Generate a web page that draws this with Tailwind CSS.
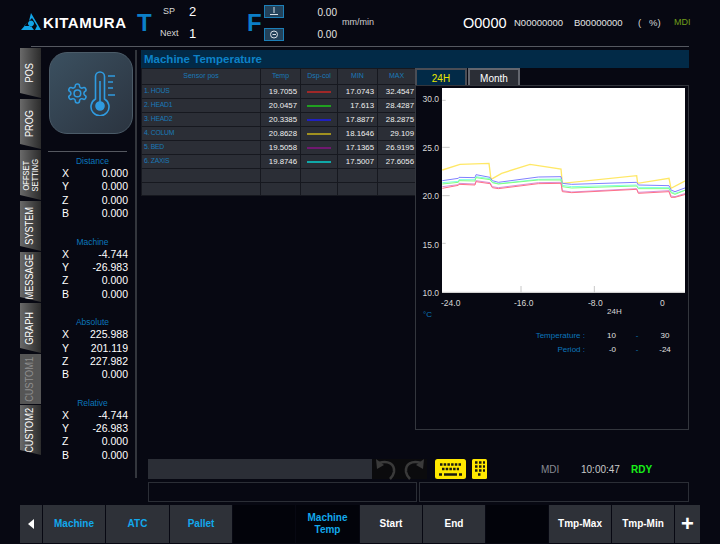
<!DOCTYPE html>
<html lang="en">
<head>
    <meta charset="UTF-8">
    <title>Machine Temperature</title>
    <script src="https://cdn.jsdelivr.net/npm/@tailwindcss/browser@4"></script>
</head>
<body class="w-[720px] h-[544px] overflow-hidden bg-[#070812] text-white font-['Liberation_Sans',sans-serif]">
    <!-- Header -->
    <header class="h-[46px] flex items-center pl-[21px]">
        <svg class="w-[20px] h-[17px] mt-[-3px]" viewBox="0 0 20 17">
            <path fill="#12a5e8" fill-rule="evenodd" d="M10 0 20 17H14L16 13 11 5 8 8ZM7 9 3 13H10L13 17H0ZM10 7.500a3 3 0 1 0 .01 0Z"/>
        </svg>
        <span class="ml-[2px] w-[84px] mt-[-1px] text-[15px] leading-none font-bold tracking-[0.6px]">KITAMURA</span>
        <span class="ml-[10px] w-[24px] text-[24px] leading-none font-bold text-[#0b7fc8]">T</span>
        <div class="w-[46px] ml-[-1px] flex flex-col gap-[7px]">
            <div class="flex items-center h-[15px] text-[9px] text-[#d8d8d8]"><span class="w-[29px] pl-[3px]">SP</span><span class="text-[13px] text-white">2</span></div>
            <div class="flex items-center h-[15px] text-[9px] text-[#d8d8d8]"><span class="w-[29px]">Next</span><span class="text-[13px] text-white">1</span></div>
        </div>
        <span class="ml-[41px] w-[17px] text-[24px] leading-none font-bold text-[#0b7fc8]">F</span>
        <div class="flex flex-col gap-[10px]">
            <div class="w-[20px] h-[13px] border border-[#1c7fb8] bg-[#23425a] flex justify-center">
                <svg class="w-[10px] h-[11px]" viewBox="0 0 10 11" fill="none" stroke="#d8e0e6"><path d="M5 1V7M1 8.500H9"/></svg>
            </div>
            <div class="w-[20px] h-[13px] border border-[#1c7fb8] bg-[#23425a] flex justify-center">
                <svg class="w-[10px] h-[11px]" viewBox="0 0 10 11" fill="none" stroke="#d8e0e6"><circle cx="5" cy="5.500" r="3.500"/><path d="M3.500 5.500H7"/></svg>
            </div>
        </div>
        <div class="w-[53px] flex flex-col gap-[9px] text-right text-[10px] leading-[13px] text-[#e4e4e4]">
            <span>0.00</span>
            <span>0.00</span>
        </div>
        <span class="ml-[5px] w-[121px] text-[9px] text-[#d0d0d0]">mm/min</span>
        <span class="w-[51px] text-[14.500px] leading-none text-white">O0000</span>
        <span class="w-[60px] text-[9.500px] text-[#e4e4e4]">N00000000</span>
        <span class="w-[64px] text-[9.500px] text-[#e4e4e4]">B00000000</span>
        <span class="w-[36px] text-[9.500px] text-[#d8d8d8] whitespace-pre">(   %)</span>
        <span class="text-[9px] text-[#6f9e1a]">MDI</span>
    </header>
    <div class="h-px ml-[31px] w-[658px] bg-[#555860]"></div>

    <main class="flex h-[457px]">
        <!-- Side tabs -->
        <nav class="ml-[20px] w-[21px] pt-[1px] flex flex-col gap-[1px]">
            <div class="h-[50px] flex items-center justify-center bg-gradient-to-r from-[#6a6a6a] to-[#2c2c2c] [clip-path:polygon(0_0,100%_0,100%_100%,0_90%)]"><span class="text-[9.200px] leading-none [writing-mode:vertical-rl] rotate-180 scale-x-[1.2]">POS</span></div>
            <div class="h-[50px] flex items-center justify-center bg-gradient-to-r from-[#6a6a6a] to-[#2c2c2c] [clip-path:polygon(0_0,100%_0,100%_100%,0_90%)]"><span class="text-[9.200px] leading-none [writing-mode:vertical-rl] rotate-180 scale-x-[1.2]">PROG</span></div>
            <div class="h-[50px] flex items-center justify-center bg-gradient-to-r from-[#6a6a6a] to-[#2c2c2c] [clip-path:polygon(0_0,100%_0,100%_100%,0_90%)]"><span class="text-[7.500px] leading-[8px] text-center [writing-mode:vertical-rl] rotate-180 scale-x-[1.2]">OFFSET<br>SETTING</span></div>
            <div class="h-[50px] flex items-center justify-center bg-gradient-to-r from-[#6a6a6a] to-[#2c2c2c] [clip-path:polygon(0_0,100%_0,100%_100%,0_90%)]"><span class="text-[9.200px] leading-none [writing-mode:vertical-rl] rotate-180 scale-x-[1.2]">SYSTEM</span></div>
            <div class="h-[50px] flex items-center justify-center bg-gradient-to-r from-[#6a6a6a] to-[#2c2c2c] [clip-path:polygon(0_0,100%_0,100%_100%,0_90%)]"><span class="text-[9.200px] leading-none [writing-mode:vertical-rl] rotate-180 scale-x-[1.2]">MESSAGE</span></div>
            <div class="h-[50px] flex items-center justify-center bg-gradient-to-r from-[#6a6a6a] to-[#2c2c2c] [clip-path:polygon(0_0,100%_0,100%_100%,0_90%)]"><span class="text-[9.200px] leading-none [writing-mode:vertical-rl] rotate-180 scale-x-[1.2]">GRAPH</span></div>
            <div class="h-[50px] flex items-center justify-center bg-[#555555]"><span class="text-[9.200px] leading-none text-[#8e8e8e] [writing-mode:vertical-rl] rotate-180 scale-x-[1.2]">CUSTOM1</span></div>
            <div class="h-[50px] flex items-center justify-center bg-gradient-to-r from-[#6a6a6a] to-[#2c2c2c] [clip-path:polygon(0_0,100%_0,100%_100%,0_90%)]"><span class="text-[9.200px] leading-none [writing-mode:vertical-rl] rotate-180 scale-x-[1.2]">CUSTOM2</span></div>
        </nav>

        <!-- Position readouts -->
        <section class="w-[96px] h-[428px] mt-[3px] border-r-2 border-[#33363d]">
            <div class="ml-[8px] mt-[2px] w-[84px] h-[82px] rounded-[18px] border border-[#4b5b68] bg-gradient-to-br from-[#3b5060] to-[#2b3440] flex items-center justify-center">
                <svg class="w-[52px] h-[46px]" viewBox="0 0 52 46" fill="none" stroke="#2f9be0" stroke-width="1.600">
                    <g transform="translate(1 12) scale(0.95)">
                        <path d="M12.220 2h-.44a2 2 0 0 0-2 2v.18a2 2 0 0 1-1 1.730l-.43.25a2 2 0 0 1-2 0l-.15-.08a2 2 0 0 0-2.730.73l-.22.38a2 2 0 0 0 .73 2.730l.15.1a2 2 0 0 1 1 1.720v.51a2 2 0 0 1-1 1.740l-.15.09a2 2 0 0 0-.73 2.730l.22.38a2 2 0 0 0 2.730.73l.15-.08a2 2 0 0 1 2 0l.43.25a2 2 0 0 1 1 1.730V20a2 2 0 0 0 2 2h.44a2 2 0 0 0 2-2v-.18a2 2 0 0 1 1-1.730l.43-.25a2 2 0 0 1 2 0l.15.08a2 2 0 0 0 2.730-.73l.22-.39a2 2 0 0 0-.73-2.730l-.15-.08a2 2 0 0 1-1-1.740v-.5a2 2 0 0 1 1-1.740l.15-.09a2 2 0 0 0 .73-2.730l-.22-.38a2 2 0 0 0-2.730-.73l-.15.08a2 2 0 0 1-2 0l-.43-.25a2 2 0 0 1-1-1.730V4a2 2 0 0 0-2-2z"/>
                        <circle cx="12" cy="12" r="3.500"/>
                    </g>
                    <path d="M30.500 29V6.500a4.500 4.500 0 0 1 9 0V29a9 9 0 1 1-9 0Z"/>
                    <path d="M35 11V36"/>
                    <circle cx="35" cy="36" r="4" fill="#2f9be0"/>
                    <path d="M43 6H50M43 12H48M43 18H48M43 25H50"/>
                </svg>
            </div>
            <div class="ml-[7px] mt-[17px] w-[79px] h-px bg-[#555860]"></div>
            <div class="mt-[1px] w-[66px] ml-[8px] box-content text-[10.500px] leading-[13.330px] grid grid-cols-[auto_1fr] pl-[13px]">
                <div class="col-span-2 h-[14px] pt-[2px] pr-[5px] text-[8.500px] text-center text-[#0b76bb]">Distance</div>
                <span>X</span><span class="text-right">0.000</span>
                <span>Y</span><span class="text-right">0.000</span>
                <span>Z</span><span class="text-right">0.000</span>
                <span>B</span><span class="text-right">0.000</span>
                <div class="col-span-2 h-[14px] mt-[13.300px] pt-[2px] pr-[5px] text-[8.500px] text-center text-[#0b76bb]">Machine</div>
                <span>X</span><span class="text-right">-4.744</span>
                <span>Y</span><span class="text-right">-26.983</span>
                <span>Z</span><span class="text-right">0.000</span>
                <span>B</span><span class="text-right">0.000</span>
                <div class="col-span-2 h-[14px] mt-[13.300px] pt-[2px] pr-[5px] text-[8.500px] text-center text-[#0b76bb]">Absolute</div>
                <span>X</span><span class="text-right">225.988</span>
                <span>Y</span><span class="text-right">201.119</span>
                <span>Z</span><span class="text-right">227.982</span>
                <span>B</span><span class="text-right">0.000</span>
                <div class="col-span-2 h-[14px] mt-[13.300px] pt-[2px] pr-[5px] text-[8.500px] text-center text-[#0b76bb]">Relative</div>
                <span>X</span><span class="text-right">-4.744</span>
                <span>Y</span><span class="text-right">-26.983</span>
                <span>Z</span><span class="text-right">0.000</span>
                <span>B</span><span class="text-right">0.000</span>
            </div>
        </section>

        <!-- Content -->
        <section class="ml-[4px] w-[548px] pt-[3px]">
            <h1 class="h-[18px] pl-[3px] bg-[#022a47] text-[11.500px] leading-[18px] font-bold text-[#0d82c8]">Machine Temperature</h1>
            <div class="flex items-start">
                <table class="w-[274px] shrink-0 table-fixed border-collapse bg-[#2b2e36] text-[7.800px] text-right text-[#f0f0f0]">
                    <colgroup><col class="w-[119px]"><col class="w-[40px]"><col class="w-[37px]"><col class="w-[40px]"><col class="w-[38px]"></colgroup>
                    <thead class="text-center text-[7px] text-[#1a7ab8]">
                        <tr class="h-[16px]"><th class="border border-[#16181f] font-normal">Sensor pos</th><th class="border border-[#16181f] font-normal">Temp</th><th class="border border-[#16181f] font-normal">Dsp-col</th><th class="border border-[#16181f] font-normal">MIN</th><th class="border border-[#16181f] font-normal">MAX</th></tr>
                    </thead>
                    <tbody>
                        <tr class="h-[14px]"><td class="border border-[#16181f] pl-[2px] text-left text-[6.800px] tracking-[-0.25px] text-[#1a7ab8]">1. HOUS</td><td class="border border-[#16181f] pr-[3px]">19.7055</td><td class="border border-[#16181f]"><div class="mx-auto w-[24px] h-[2px] bg-[#a02828]"></div></td><td class="border border-[#16181f] pr-[3px]">17.0743</td><td class="border border-[#16181f] pr-[1px]">32.4547</td></tr>
                        <tr class="h-[14px]"><td class="border border-[#16181f] pl-[2px] text-left text-[6.800px] tracking-[-0.25px] text-[#1a7ab8]">2. HEAD1</td><td class="border border-[#16181f] pr-[3px]">20.0457</td><td class="border border-[#16181f]"><div class="mx-auto w-[24px] h-[2px] bg-[#20a020]"></div></td><td class="border border-[#16181f] pr-[3px]">17.613</td><td class="border border-[#16181f] pr-[1px]">28.4287</td></tr>
                        <tr class="h-[14px]"><td class="border border-[#16181f] pl-[2px] text-left text-[6.800px] tracking-[-0.25px] text-[#1a7ab8]">3. HEAD2</td><td class="border border-[#16181f] pr-[3px]">20.3385</td><td class="border border-[#16181f]"><div class="mx-auto w-[24px] h-[2px] bg-[#2020c0]"></div></td><td class="border border-[#16181f] pr-[3px]">17.8877</td><td class="border border-[#16181f] pr-[1px]">28.2875</td></tr>
                        <tr class="h-[14px]"><td class="border border-[#16181f] pl-[2px] text-left text-[6.800px] tracking-[-0.25px] text-[#1a7ab8]">4. COLUM</td><td class="border border-[#16181f] pr-[3px]">20.8628</td><td class="border border-[#16181f]"><div class="mx-auto w-[24px] h-[2px] bg-[#a09020]"></div></td><td class="border border-[#16181f] pr-[3px]">18.1646</td><td class="border border-[#16181f] pr-[1px]">29.109</td></tr>
                        <tr class="h-[14px]"><td class="border border-[#16181f] pl-[2px] text-left text-[6.800px] tracking-[-0.25px] text-[#1a7ab8]">5. BED</td><td class="border border-[#16181f] pr-[3px]">19.5058</td><td class="border border-[#16181f]"><div class="mx-auto w-[24px] h-[2px] bg-[#701870]"></div></td><td class="border border-[#16181f] pr-[3px]">17.1365</td><td class="border border-[#16181f] pr-[1px]">26.9195</td></tr>
                        <tr class="h-[14px]"><td class="border border-[#16181f] pl-[2px] text-left text-[6.800px] tracking-[-0.25px] text-[#1a7ab8]">6. ZAXIS</td><td class="border border-[#16181f] pr-[3px]">19.8746</td><td class="border border-[#16181f]"><div class="mx-auto w-[24px] h-[2px] bg-[#10a8a8]"></div></td><td class="border border-[#16181f] pr-[3px]">17.5007</td><td class="border border-[#16181f] pr-[1px]">27.6056</td></tr>
                        <tr class="h-[14px]"><td class="border border-[#16181f]"></td><td class="border border-[#16181f]"></td><td class="border border-[#16181f]"></td><td class="border border-[#16181f]"></td><td class="border border-[#16181f]"></td></tr>
                        <tr class="h-[13px]"><td class="border border-[#16181f]"></td><td class="border border-[#16181f]"></td><td class="border border-[#16181f]"></td><td class="border border-[#16181f]"></td><td class="border border-[#16181f]"></td></tr>
                    </tbody>
                </table>

                <!-- Trend chart -->
                <div class="w-[274px] ml-[-1px]">
                    <div class="flex h-[17px] gap-[1px] text-[10px] leading-[17px] text-center">
                        <div class="w-[52px] pt-[1px] bg-[#022a47] border-2 border-b-0 border-[#4a4d55] leading-[15px] text-[#e8e800]">24H</div>
                        <div class="w-[52px] pt-[1px] bg-[#2b2e36] border-2 border-b-0 border-[#63666e] leading-[15px]">Month</div>
                    </div>
                    <div class="h-[345px] border border-[#33363d] pt-[2px] text-[8.500px] text-[#d8d8d8]">
                        <div class="flex">
                            <div class="w-[26px] h-[210px] mb-[-5px] pt-[6px] flex flex-col justify-between items-end pr-[3px] leading-[10px]">
                                <span>30.0</span><span>25.0</span><span>20.0</span><span>15.0</span><span>10.0</span>
                            </div>
                            <svg class="w-[243px] h-[205px] bg-white" viewBox="81 -156 729 615" fill="none" stroke-width="3">
                                <path stroke="#c8c8c8" d="M82 -119H92M82 22H104M82 167H104M82 310H92M318 438V459M538 438V459M81 457H810"/>
                                <polyline stroke="#ffe866" stroke-width="4" points="82,90 135,73 222,70 228,118 260,100 345,73 438,87 442,130 665,107 668,130 762,115 768,145 812,122"/>
                                <polyline stroke="#8080ff" points="82,122 130,115 132,112 180,113 183,104 225,112 232,122 250,127 370,111 438,110 442,130 470,133 665,127 670,135 762,137 768,150 780,155 812,143"/>
                                <polyline stroke="#80ffe0" points="82,128 130,124 132,119 180,119 183,110 225,116 232,126 250,131 370,118 438,117 442,136 470,140 665,135 670,142 762,143 768,155 780,160 812,150"/>
                                <polyline stroke="#80ff80" points="82,132 130,127 132,122 180,123 183,113 225,119 232,128 250,132 370,120 438,120 442,140 470,144 665,138 670,146 762,146 768,158 780,163 812,150"/>
                                <polyline stroke="#d890d8" points="82,140 130,134 132,130 180,132 183,122 225,128 232,140 250,143 370,128 438,127 442,152 470,156 665,146 670,157 762,152 768,168 780,170 812,160"/>
                                <polyline stroke="#ff7088" points="82,145 130,136 132,133 180,135 183,125 225,131 232,143 250,146 370,131 438,130 442,155 470,158 665,148 670,160 762,155 768,172 780,172 812,163"/>
                            </svg>
                        </div>
                        <div class="flex h-[10px] mt-[5px] leading-[10px] text-center whitespace-nowrap">
                            <span class="w-[17px] ml-[25px]">-24.0</span>
                            <span class="w-[18px] ml-[56px]">-16.0</span>
                            <span class="w-[14px] ml-[56px]">-8.0</span>
                            <span class="w-[4px] ml-[58px]">0</span>
                        </div>
                        <div class="flex h-[10px] mt-[-1px] leading-[10px] text-[8px]">
                            <span class="ml-[7px] mt-[3px] w-[184px] text-[#0b76bb]">°C</span>
                            <span>24H</span>
                        </div>
                        <div class="mt-[14px] grid grid-cols-[169px_31px_42px_14px] gap-y-[4px] leading-[10px] text-[8px] text-center whitespace-nowrap">
                            <span class="text-right text-[#0b76bb]">Temperature :</span><span class="text-right text-[#e0e0e0]">10</span><span class="text-[#0b76bb]">-</span><span class="text-[#e0e0e0]">30</span>
                            <span class="text-right text-[#0b76bb]">Period :</span><span class="text-right text-[#e0e0e0]">-0</span><span class="text-[#0b76bb]">-</span><span class="text-[#e0e0e0]">-24</span>
                        </div>
                    </div>
                </div>
            </div>

            <!-- Input row -->
            <div class="mt-[29px] ml-[7px] h-[20px] flex items-center">
                <div class="w-[224px] h-[20px] bg-[#2b2e36]"></div>
                <div class="w-[55px] h-[20px] pl-[3px] flex items-center gap-[6px] bg-[#0b0b0d]">
                    <svg class="w-[22px] h-[22px]" viewBox="0 0 22 22" fill="none" stroke="#3a3a3a" stroke-width="2.500"><path d="M4 5C13 2 20 6 19 14 18.500 17 17 19 15 21"/><path fill="#3a3a3a" stroke="none" d="M1 1 2 11 9 7Z"/></svg>
                    <svg class="w-[22px] h-[22px]" viewBox="0 0 22 22" fill="none" stroke="#3a3a3a" stroke-width="2.500"><path d="M18 5C9 2 2 6 3 14 3.500 17 5 19 7 21"/><path fill="#3a3a3a" stroke="none" d="M21 1 20 11 13 7Z"/></svg>
                </div>
                <svg class="ml-[8px] w-[31px] h-[20px]" viewBox="0 0 31 20">
                    <rect width="31" height="20" rx="2.500" fill="#ffe800"/>
                    <path stroke="#1a1a10" stroke-width="2.500" stroke-dasharray="2.500 1.200" d="M5 5.500H26M7 10H24"/>
                    <path stroke="#1a1a10" stroke-width="2.500" d="M4 15.500H7M9 15.500H22M24 15.500H27"/>
                </svg>
                <svg class="ml-[6px] w-[15px] h-[20px]" viewBox="0 0 15 20">
                    <rect width="15" height="20" rx="1.500" fill="#ffe800"/>
                    <path stroke="#1a1a10" stroke-width="2.500" stroke-dasharray="2.500 1.500" d="M3 3.500H13M3 7.500H13M3 11.500H13M6 15.500H10"/>
                </svg>
                <span class="ml-[54px] w-[40px] text-[10px] text-[#888b92]">MDI</span>
                <span class="w-[50px] text-[10px] text-[#c8c8c8]">10:00:47</span>
                <span class="text-[10px] font-bold text-[#18f018]">RDY</span>
            </div>
            <div class="mt-[3px] ml-[7px] flex gap-[2px]">
                <div class="w-[269px] h-[20px] border border-[#2b2e36]"></div>
                <div class="w-[270px] h-[20px] border border-[#2b2e36]"></div>
            </div>
        </section>
    </main>

    <!-- Function keys -->
    <footer class="mt-[1px] ml-[20px] w-[680px] h-[38px] flex gap-[1px] text-[10px] leading-[12px] font-bold text-center">
        <button class="w-[22px] bg-[#2e3138] flex items-center justify-center"><svg class="w-[6px] h-[10px]" viewBox="0 0 6 10"><path fill="#fff" d="M6 0V10L0 5Z"/></svg></button>
        <button class="w-[62px] bg-[#2e3138] text-[#12a8ec]">Machine</button>
        <button class="w-[63px] bg-[#2e3138] text-[#12a8ec]">ATC</button>
        <button class="w-[62px] bg-[#2e3138] text-[#12a8ec]">Pallet</button>
        <div class="w-[62px] bg-[#02030a]"></div>
        <button class="w-[63px] bg-[#02030a] text-[#12a8ec]">Machine<br>Temp</button>
        <button class="w-[62px] bg-[#2e3138]">Start</button>
        <button class="w-[62px] bg-[#2e3138]">End</button>
        <div class="w-[62px] bg-[#02030a]"></div>
        <button class="w-[62px] bg-[#2e3138]">Tmp-Max</button>
        <button class="w-[62px] bg-[#2e3138]">Tmp-Min</button>
        <button class="flex-1 bg-[#2e3138] text-[22px]">+</button>
    </footer>
</body>
</html>
